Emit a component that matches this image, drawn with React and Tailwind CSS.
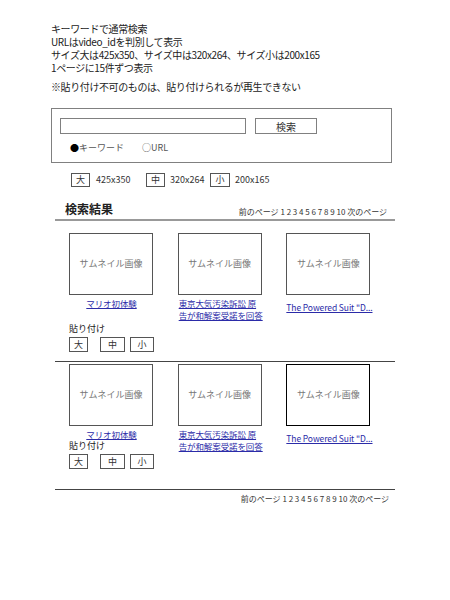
import React from "react";

const results = [
  { title: "マリオ初体験" },
  { title: "東京大気汚染訴訟 原告が和解案受諾を回答", left: true },
  { title: "The Powered Suit \"D...", low: true },
];

function Thumb({ dark }) {
  return (
    <div
      className={`flex h-[62px] w-[84px] items-center justify-center border text-[9px] text-[#777] ${
        dark ? "border-black" : "border-[#555]"
      }`}
    >
      サムネイル画像
    </div>
  );
}

function PasteButtons() {
  return (
    <div className="mt-[2px] flex text-[9px] text-[#333]">
      <span className="flex h-[15px] w-[19px] items-center justify-center border border-[#555]">大</span>
      <span className="ml-[12px] flex h-[15px] w-[25px] items-center justify-center border border-[#555]">中</span>
      <span className="ml-[5px] flex h-[15px] w-[24px] items-center justify-center border border-[#555]">小</span>
    </div>
  );
}

function ResultRow({ first, lastDark }) {
  return (
    <div className="flex pl-[14px]">
      {results.map((r, i) => (
        <div key={i} className="w-[110px]">
          <Thumb dark={lastDark && i === 2} />
          <a
            href="#"
            className={`block w-[85px] text-[8.5px] leading-[12px] tracking-[-0.1px] text-[#2b2ba8] underline ${
              r.left ? "pl-[1px] text-left" : "text-center"
            } ${r.low ? "mt-[6px] whitespace-nowrap" : "mt-[2px]"}`}
          >
            {r.title}
          </a>
          {i === 0 && (
            <div className={first ? "mt-[14px]" : ""}>
              <div className="text-[9px] leading-[12px] text-[#222]">貼り付け</div>
              <PasteButtons />
            </div>
          )}
        </div>
      ))}
    </div>
  );
}

function Pager() {
  return (
    <div className="text-[8px] leading-[11px] text-[#333]">
      前のページ 1 2 3 4 5 6 7 8 9 10 次のページ
    </div>
  );
}

export default function App() {
  return (
    <div className="min-h-[600px] w-[450px] bg-white pt-[22px] font-['Noto_Sans_CJK_JP','Noto_Sans',sans-serif] text-[#222]">
      <div className="pl-[51px] text-[10px] leading-[13px] tracking-[-0.4px]">
        <p>キーワードで通常検索</p>
        <p>URLはvideo_idを判別して表示</p>
        <p>サイズ大は425x350、サイズ中は320x264、サイズ小は200x165</p>
        <p>1ページに15件ずつ表示</p>
        <p className="mt-[6px]">※貼り付け不可のものは、貼り付けられるが再生できない</p>
      </div>

      <div className="ml-[51px] mt-[15px] h-[55px] w-[341px] border border-[#808080] pl-[8px] pt-[9px]">
        <div className="flex">
          <div className="h-[16px] w-[186px] border border-[#808080]" />
          <button className="ml-[9px] flex h-[16px] w-[62px] items-center justify-center border border-[#808080] text-[10px] text-[#333]">
            検索
          </button>
        </div>
        <div className="mt-[8px] flex pl-[10px] text-[9px] leading-[12px] text-[#555]">
          <span className="w-[72px]">
            <span className="text-black">●</span>キーワード
          </span>
          <span>○URL</span>
        </div>
      </div>

      <div className="ml-[71px] mt-[10px] flex items-center text-[9px] text-[#333]">
        <span className="flex h-[14px] w-[19px] items-center justify-center border border-[#555]">大</span>
        <span className="ml-[6px] w-[50px]">425x350</span>
        <span className="flex h-[14px] w-[19px] items-center justify-center border border-[#555]">中</span>
        <span className="ml-[5px] w-[40px]">320x264</span>
        <span className="flex h-[14px] w-[20px] items-center justify-center border border-[#555]">小</span>
        <span className="ml-[5px]">200x165</span>
      </div>

      <div className="ml-[55px] mt-[14px] w-[340px]">
        <div className="flex items-end justify-between pl-[10px] pr-[8px] pb-[2px]">
          <h2 className="text-[12px] font-bold leading-[16px]">検索結果</h2>
          <Pager />
        </div>
        <div className="h-[2px] bg-[#999]" />

        <div className="mt-[12px]">
          <ResultRow first />
        </div>
        <div className="mt-[9px] h-px bg-[#444]" />
        <div className="mt-[2px]">
          <ResultRow lastDark />
        </div>
        <div className="mt-[20px] h-px bg-[#444]" />
        <div className="mt-[3px] flex justify-end pr-[6px]">
          <Pager />
        </div>
      </div>
    </div>
  );
}
